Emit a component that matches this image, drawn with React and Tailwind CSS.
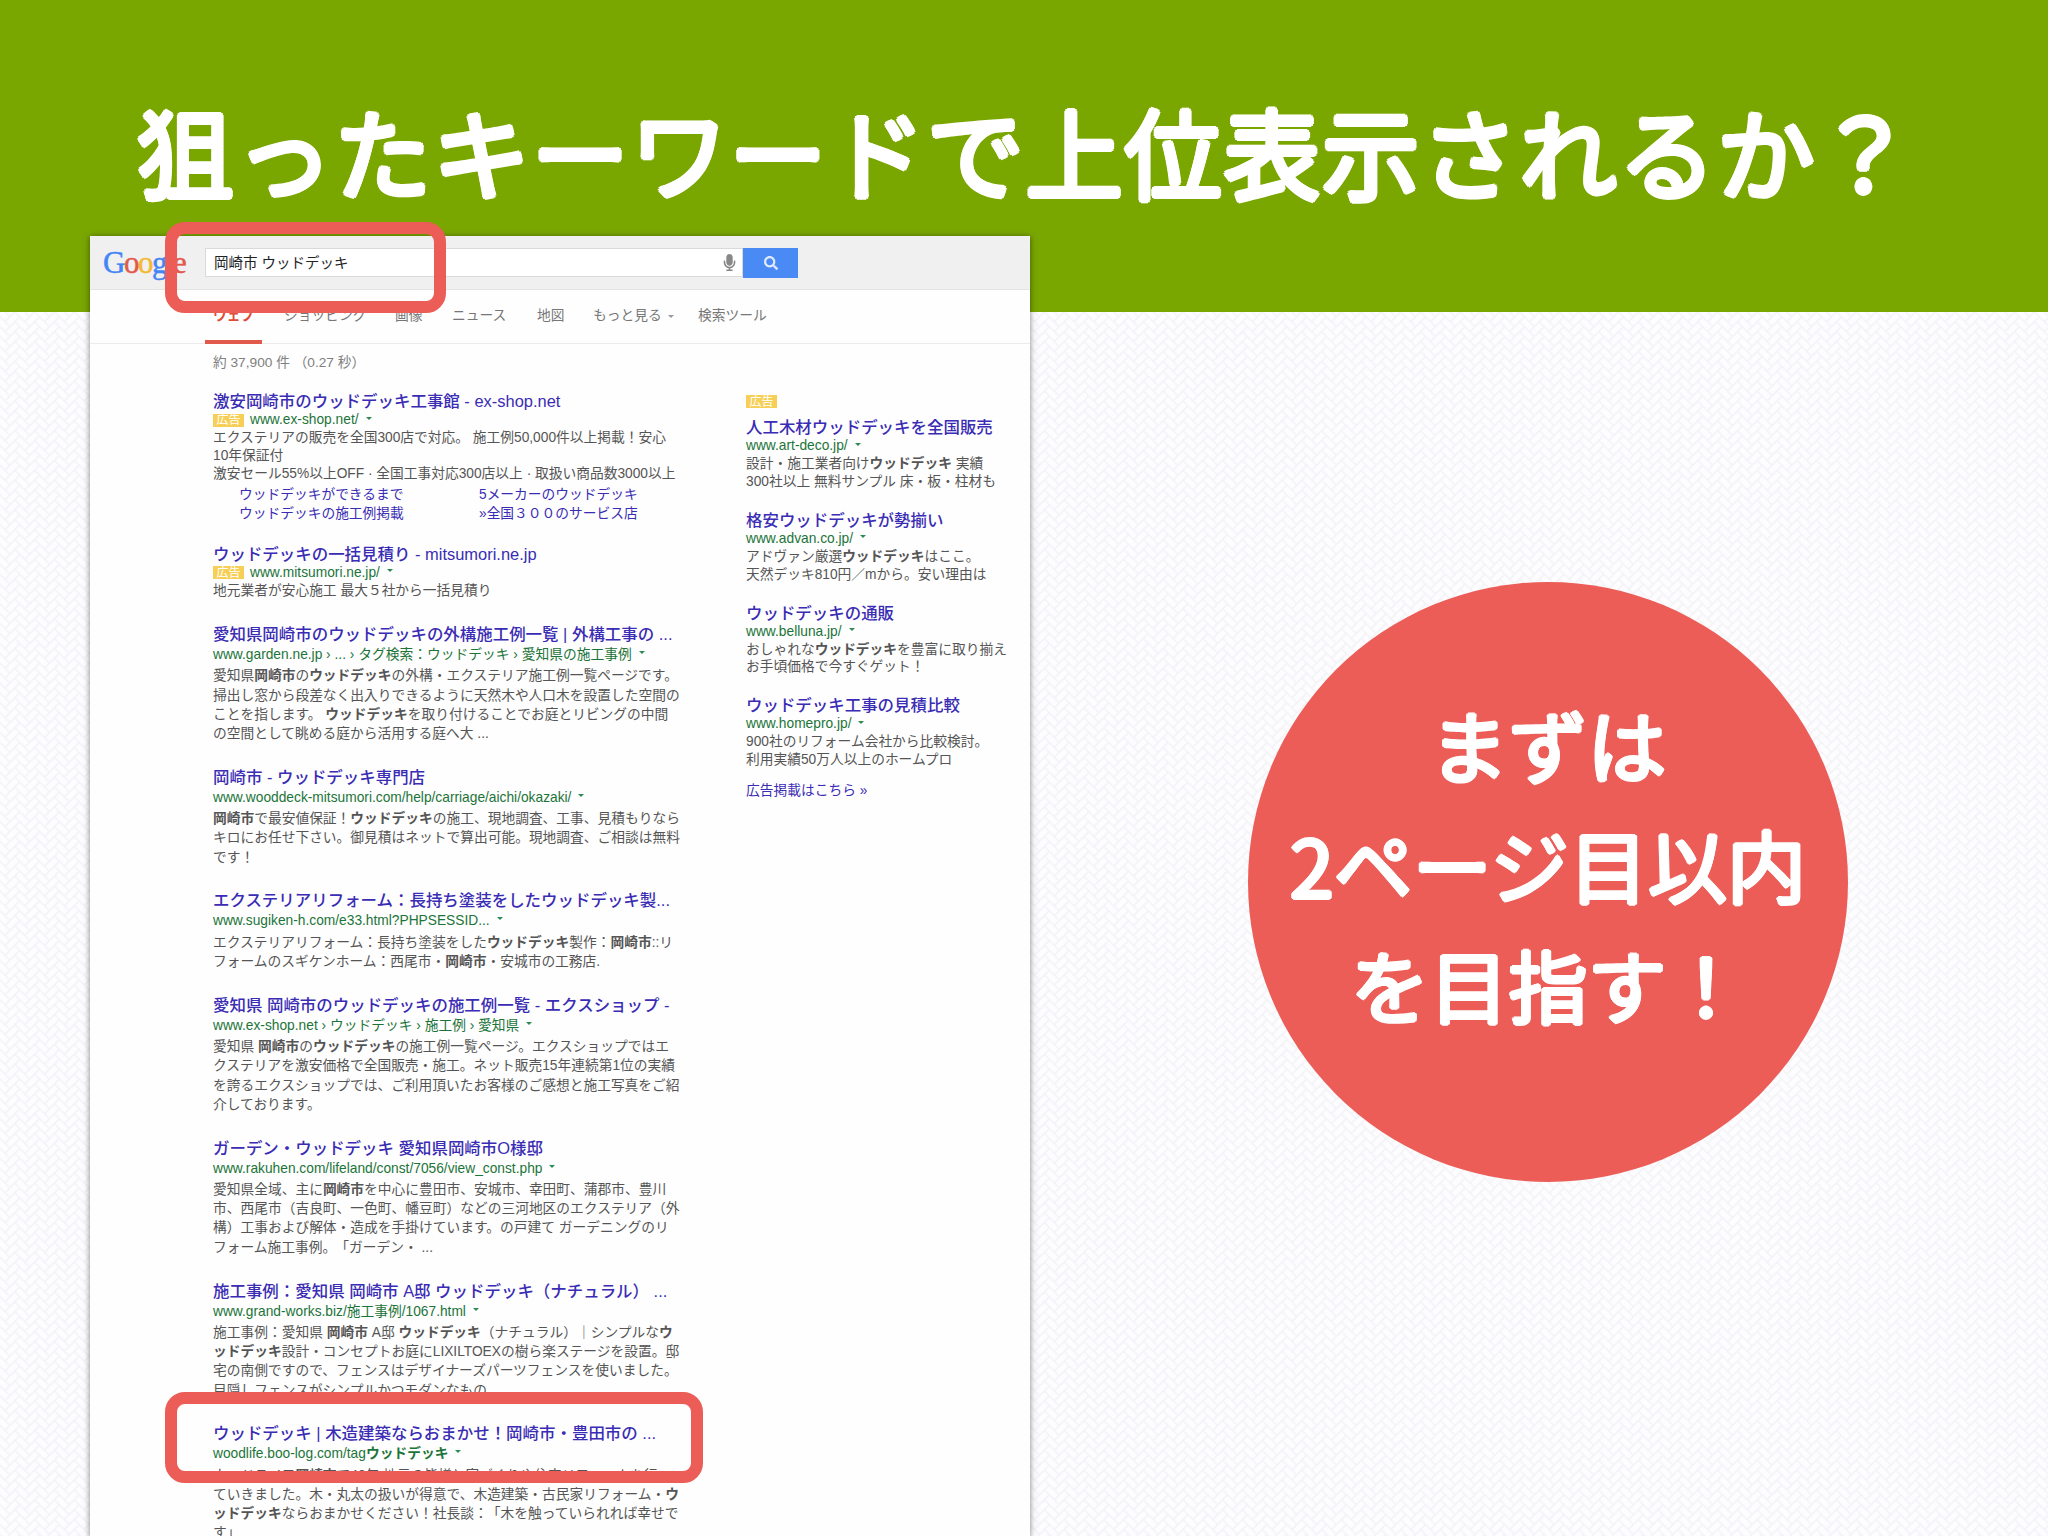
import React from 'react';
import { FaMicrophone, FaSearch } from 'react-icons/fa';

const tabs = [
  { label: 'ウェブ', style: 'w-[71px] text-[#dd4b39] font-bold' },
  { label: 'ショッピング', style: 'w-[111px]' },
  { label: '画像', style: 'w-[57px]' },
  { label: 'ニュース', style: 'w-[85px]' },
  { label: '地図', style: 'w-[56px]' },
  { label: 'もっと見る', style: 'w-[105px]', caret: true },
  { label: '検索ツール', style: '' },
];

const B = ({ children }) => <b className="font-bold">{children}</b>;

const adResults = [
  {
    title: '激安岡崎市のウッドデッキ工事館 - ex-shop.net',
    url: 'www.ex-shop.net/',
    lines: [
      'エクステリアの販売を全国300店で対応。 施工例50,000件以上掲載！安心',
      '10年保証付',
      '激安セール55%以上OFF · 全国工事対応300店以上 · 取扱い商品数3000以上',
    ],
    links: [
      ['ウッドデッキができるまで', '5メーカーのウッドデッキ'],
      ['ウッドデッキの施工例掲載', '»全国３００のサービス店'],
    ],
  },
  {
    title: 'ウッドデッキの一括見積り - mitsumori.ne.jp',
    url: 'www.mitsumori.ne.jp/',
    lines: ['地元業者が安心施工 最大５社から一括見積り'],
  },
];

const results = [
  {
    title: '愛知県岡崎市のウッドデッキの外構施工例一覧 | 外構工事の ...',
    url: 'www.garden.ne.jp › ... › タグ検索：ウッドデッキ › 愛知県の施工事例',
    lines: [
      <>愛知県<B>岡崎市</B>の<B>ウッドデッキ</B>の外構・エクステリア施工例一覧ページです。</>,
      '掃出し窓から段差なく出入りできるように天然木や人口木を設置した空間の',
      <>ことを指します。 <B>ウッドデッキ</B>を取り付けることでお庭とリビングの中間</>,
      'の空間として眺める庭から活用する庭へ大 ...',
    ],
  },
  {
    title: '岡崎市 - ウッドデッキ専門店',
    url: 'www.wooddeck-mitsumori.com/help/carriage/aichi/okazaki/',
    lines: [
      <><B>岡崎市</B>で最安値保証！<B>ウッドデッキ</B>の施工、現地調査、工事、見積もりなら</>,
      'キロにお任せ下さい。御見積はネットで算出可能。現地調査、ご相談は無料',
      'です！',
    ],
  },
  {
    title: 'エクステリアリフォーム：長持ち塗装をしたウッドデッキ製...',
    url: 'www.sugiken-h.com/e33.html?PHPSESSID...',
    lines: [
      <>エクステリアリフォーム：長持ち塗装をした<B>ウッドデッキ</B>製作：<B>岡崎市</B>::リ</>,
      <>フォームのスギケンホーム：西尾市・<B>岡崎市</B>・安城市の工務店.</>,
    ],
  },
  {
    title: '愛知県 岡崎市のウッドデッキの施工例一覧 - エクスショップ -',
    url: 'www.ex-shop.net › ウッドデッキ › 施工例 › 愛知県',
    lines: [
      <>愛知県 <B>岡崎市</B>の<B>ウッドデッキ</B>の施工例一覧ページ。エクスショップではエ</>,
      'クステリアを激安価格で全国販売・施工。ネット販売15年連続第1位の実績',
      'を誇るエクスショップでは、ご利用頂いたお客様のご感想と施工写真をご紹',
      '介しております。',
    ],
  },
  {
    title: 'ガーデン・ウッドデッキ 愛知県岡崎市O様邸',
    url: 'www.rakuhen.com/lifeland/const/7056/view_const.php',
    lines: [
      <>愛知県全域、主に<B>岡崎市</B>を中心に豊田市、安城市、幸田町、蒲郡市、豊川</>,
      '市、西尾市（吉良町、一色町、幡豆町）などの三河地区のエクステリア（外',
      '構）工事および解体・造成を手掛けています。の戸建て ガーデニングのリ',
      <>フォーム施工事例。<span className="ml-[6px]">「ガーデン・ ...</span></>,
    ],
  },
  {
    title: '施工事例：愛知県 岡崎市 A邸 ウッドデッキ（ナチュラル） ...',
    url: 'www.grand-works.biz/施工事例/1067.html',
    lines: [
      <>施工事例：愛知県 <B>岡崎市</B> A邸 <B>ウッドデッキ</B>（ナチュラル）｜シンプルな<B>ウ</B></>,
      <><B>ッドデッキ</B>設計・コンセプトお庭にLIXILTOEXの樹ら楽ステージを設置。邸</>,
      '宅の南側ですので、フェンスはデザイナーズパーツフェンスを使いました。',
      '目隠しフェンスがシンプルかつモダンなもの.',
    ],
  },
  {
    title: 'ウッドデッキ | 木造建築ならおまかせ！岡崎市・豊田市の ...',
    url: <>woodlife.boo-log.com/tag<B>ウッドデッキ</B></>,
    lines: [
      <>ウッドライフ<B>岡崎市</B>で40年 地元の皆様と家づくりや住宅リフォームを行</>,
      <>ていきました。木・丸太の扱いが得意で、木造建築・古民家リフォーム・<B>ウ</B></>,
      <><B>ッドデッキ</B>ならおまかせください！社長談：<span className="ml-[6px]">「木を触っていられれば幸せで</span></>,
      'す」',
    ],
  },
];

const sideAds = [
  {
    title: '人工木材ウッドデッキを全国販売',
    url: 'www.art-deco.jp/',
    lines: [<>設計・施工業者向け<B>ウッドデッキ</B> 実績</>, '300社以上 無料サンプル 床・板・柱材も'],
  },
  {
    title: '格安ウッドデッキが勢揃い',
    url: 'www.advan.co.jp/',
    lines: [<>アドヴァン厳選<B>ウッドデッキ</B>はここ。</>, '天然デッキ810円／mから。安い理由は'],
  },
  {
    title: 'ウッドデッキの通販',
    url: 'www.belluna.jp/',
    lines: [<>おしゃれな<B>ウッドデッキ</B>を豊富に取り揃え</>, 'お手頃価格で今すぐゲット！'],
  },
  {
    title: 'ウッドデッキ工事の見積比較',
    url: 'www.homepro.jp/',
    lines: ['900社のリフォーム会社から比較検討。', '利用実績50万人以上のホームプロ'],
  },
];

const AdBadge = () => (
  <span className="inline-flex h-[13px] w-[31px] items-center justify-center bg-[#f7cf57] text-[12px] leading-none text-white">
    広告
  </span>
);

const Caret = () => (
  <span className="mb-1 ml-[7px] inline-block border-x-[3px] border-t-[3px] border-x-transparent border-t-[#2f8a52]" />
);

const Title = ({ children }) => (
  <h3 className="h-5 text-[16.47px] leading-5 font-medium text-[#3a2cb4]">{children}</h3>
);

const AdItem = ({ item, badge }) => (
  <>
    <Title>{item.title}</Title>
    <div className="flex h-[18px] items-center text-[13.75px] leading-[18px] text-[#1c7439]">
      {badge && <span className="mr-1.5 flex"><AdBadge /></span>}
      {item.url}
      <Caret />
    </div>
    {item.lines.map((line, i) => (
      <p key={i} className="h-[17.8px] leading-[17.8px]">{line}</p>
    ))}
  </>
);

const Result = ({ item }) => (
  <div className="mb-[23.7px]">
    <Title>{item.title}</Title>
    <div className="mb-[1.4px] flex h-[21px] items-center text-[13.75px] leading-[21px] text-[#1c7439]">
      <span>{item.url}</span>
      <Caret />
    </div>
    {item.lines.map((line, i) => (
      <p key={i} className="h-[19.2px] leading-5">{line}</p>
    ))}
  </div>
);

// herringbone of 2:1 bricks, turned 45 degrees
const Weave = () => (
  <svg className="absolute inset-0 h-full w-full">
    <defs>
      <pattern id="weave" width="4" height="4" patternUnits="userSpaceOnUse" patternTransform="rotate(45) scale(7)">
        <path
          d="M0 0h2M0 0v1M1 1h2M1 1v1M2 2h2M2 2v1M3 3h1M0 3h1M3 3v1M3 0h1M3 0v2M0 1h1M0 1v2M1 2h1M1 2v2M2 3h1M2 3v1M2 0v1M0 4h2M3 4h1M4 0v1M4 1v2"
          fill="none"
          stroke="#f4f3f7"
          strokeWidth="0.24"
        />
      </pattern>
    </defs>
    <rect width="100%" height="100%" fill="url(#weave)" />
  </svg>
);

const SearchPage = () => (
  <div className="relative h-[1300px] w-[940px] bg-[#fefefe] text-[13.74px] whitespace-nowrap text-[#555] shadow-[0_1px_6px_rgba(0,0,0,0.5)] font-['Liberation_Sans','Noto_Sans_CJK_JP',sans-serif]">
    <div className="flex h-[54px] items-center border-b border-[#e4e4e4] bg-[#f0f0f0]">
      <div className="w-[115px] pl-[13px] font-['Liberation_Serif',serif] text-[31px] leading-none tracking-[-1.5px] text-[#4285f4] [-webkit-text-stroke:0.5px]">
        G<span className="text-[#e2584b]">o</span><span className="text-[#f4b92e]">o</span>g
        <span className="text-[#3aa757]">l</span><span className="text-[#e2584b]">e</span>
      </div>
      <div className="flex h-[29px] w-[538px] items-center justify-between border border-[#d9d9d9] bg-white pr-[6px] pl-[8px] text-[14.5px] text-[#222]">
        <span className="pt-[2px]">岡崎市 ウッドデッキ</span>
        <FaMicrophone className="h-[17px] w-[13px] text-[#888]" />
      </div>
      <div className="flex h-[30px] w-[55px] items-center justify-center bg-[#4a8af4]">
        <FaSearch className="h-[14px] w-[14px] text-[#dfeaff]" />
      </div>
    </div>
    <div className="flex h-[54px] border-b border-[#ebebeb] pl-[123px] text-[#777]">
      {tabs.map((tab) => (
        <div key={tab.label} className={`flex h-[52px] items-center ${tab.style}`}>
          {tab.label}
          {tab.caret && <span className="ml-1.5 border-x-[3px] border-t-[3px] border-x-transparent border-t-[#999]" />}
        </div>
      ))}
    </div>
    <div className="-mt-1 ml-[115px] h-1 w-[57px] bg-[#e0594b]" />

    <div className="flex pl-[123px]">
      <div className="w-[533px]">
        <p className="mt-[9px] mb-[18px] h-5 text-[13.7px] leading-5 text-[#808080]">約 37,900 件 （0.27 秒）</p>
        <AdItem item={adResults[0]} badge />
        <div className="mt-[2.6px] mb-[20.6px] ml-[26px] leading-[19.2px] text-[#3a2cb4]">
          {adResults[0].links.map(([a, b]) => (
            <div key={a} className="flex">
              <span className="w-[240px]">{a}</span>
              <span>{b}</span>
            </div>
          ))}
        </div>
        <AdItem item={adResults[1]} badge />
        <div className="h-[24.2px]" />
        {results.map((item, i) => (
          <Result key={i} item={item} />
        ))}
      </div>
      <div className="pt-[51px]">
        <div className="mb-[9px] flex h-[13px]"><AdBadge /></div>
        {sideAds.map((item) => (
          <div key={item.url} className="mb-[19.2px]">
            <AdItem item={item} />
          </div>
        ))}
        <p className="-mt-[7px] text-[#3a2cb4]">広告掲載はこちら »</p>
      </div>
    </div>
  </div>
);

export default function App() {
  return (
    <div className="relative h-[1536px] w-[2048px] overflow-hidden bg-[#fdfdff] font-['Noto_Sans_CJK_JP',sans-serif]">
      <Weave />
      <header className="relative h-[312px] bg-[#7aa600] pt-[77px] pl-[136px]">
        <h1 className="text-[98px] leading-[144px] font-normal tracking-[0.8px] whitespace-nowrap text-white [text-shadow:2.6px_0_white,-2.6px_0_white,0_2.6px_white,0_-2.6px_white,1.8px_1.8px_white,-1.8px_1.8px_white,1.8px_-1.8px_white,-1.8px_-1.8px_white]">
          狙ったキーワードで上位表示されるか？
        </h1>
      </header>
      <main className="relative -mt-[76px] flex pl-[90px]">
        <SearchPage />
        <div className="mt-[346px] ml-[218px] flex h-[600px] w-[600px] flex-col items-center rounded-full bg-[#ec5d57] pt-[102px] text-center text-[79px] leading-[120px] font-normal whitespace-nowrap text-white [text-shadow:2px_0_white,-2px_0_white,0_2px_white,0_-2px_white,1.4px_1.4px_white,-1.4px_1.4px_white,1.4px_-1.4px_white,-1.4px_-1.4px_white]">
          <p>まずは</p>
          <p>2ページ目以内</p>
          <p>を目指す！</p>
        </div>
      </main>
      {/* highlight frames */}
      <div className="absolute top-[222px] left-[165px] h-[91px] w-[281px] rounded-[20px] border-[12px] border-[#ec5d57]" />
      <div className="absolute top-[1392px] left-[165px] h-[91px] w-[538px] rounded-[20px] border-[12px] border-[#ec5d57]" />
    </div>
  );
}
